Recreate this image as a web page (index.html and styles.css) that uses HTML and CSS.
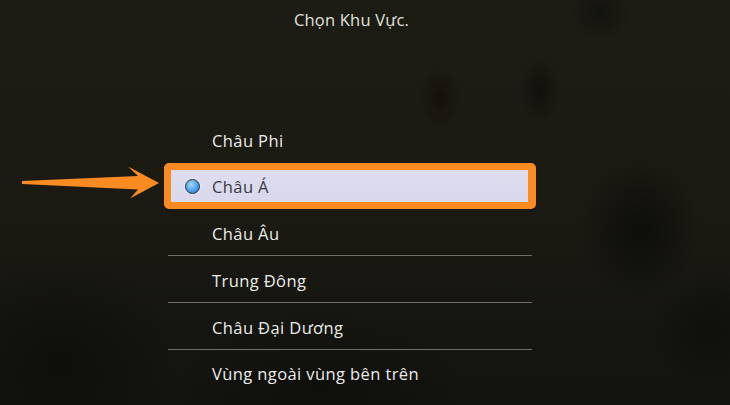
FILE: index.html
```html
<!DOCTYPE html>
<html lang="vi">
<head>
<meta charset="utf-8">
<title>Chọn Khu Vực</title>
<link rel="stylesheet" href="styles.css">
</head>
<body>
<main class="screen">
  <h1 class="title">Chọn Khu Vực.</h1>
  <ul class="regions">
    <li class="region">Châu Phi</li>
    <li class="region selected"><span class="radio"></span>Châu Á</li>
    <li class="region divided">Châu Âu</li>
    <li class="region divided">Trung Đông</li>
    <li class="region divided">Châu Đại Dương</li>
    <li class="region last">Vùng ngoài vùng bên trên</li>
  </ul>
  <svg class="pointer" width="170" height="50" viewBox="0 155 170 50" aria-hidden="true">
    <path d="M22,181 L138,176 L128,166.5 L159,183 L130,198.5 L138,189.5 L22,184 Z" fill="#f98b22"/>
  </svg>
</main>
</body>
</html>
```

FILE: styles.css
```css
* { box-sizing: border-box; }

html, body {
  margin: 0;
  padding: 0;
  width: 730px;
  height: 405px;
  overflow: hidden;
}

body {
  font-family: "Open Sans", "Noto Sans", sans-serif;
  background: #1a1912;
}

.screen {
  position: relative;
  width: 730px;
  height: 405px;
  overflow: hidden;
  background:
    radial-gradient(ellipse 20px 30px at 440px 98px, rgba(22, 10, 8, 0.6), transparent),
    radial-gradient(ellipse 20px 34px at 540px 90px, rgba(12, 12, 8, 0.6), transparent),
    radial-gradient(ellipse 30px 30px at 600px 12px, rgba(12, 12, 8, 0.5), transparent),
    radial-gradient(ellipse 60px 70px at 640px 230px, rgba(6, 6, 4, 0.6), transparent),
    radial-gradient(ellipse 60px 60px at 710px 330px, rgba(8, 8, 5, 0.5), transparent),
    radial-gradient(ellipse 120px 100px at 60px 360px, rgba(8, 8, 5, 0.5), transparent),
    radial-gradient(ellipse 150px 80px at 320px 390px, rgba(10, 10, 7, 0.5), transparent),
    linear-gradient(180deg, #1c1b14 0%, #1a1912 55%, #131310 100%);
}

.title {
  margin: 0;
  padding-top: 8px;
  padding-right: 27px;
  height: 117px;
  text-align: center;
  font-weight: 400;
  font-size: 16.5px;
  line-height: 24px;
  letter-spacing: 0.2px;
  color: #e2e2de;
}

.regions {
  list-style: none;
  margin: 0 0 0 164px;
  padding: 0;
  width: 372px;
}

.region {
  display: flex;
  align-items: center;
  height: 46px;
  padding-left: 48px;
  font-size: 16.5px;
  letter-spacing: 0.4px;
  color: #ebebe8;
}

.region.divided {
  margin: 0 4px;
  padding-left: 44px;
  height: 47px;
  border-bottom: 1px solid #6f6e6a;
  padding-top: 2px;
}

.region.last {
  padding-top: 1px;
}

.region.selected {
  border: 7px solid #f98b22;
  border-right-width: 8px;
  border-radius: 5px;
  background: linear-gradient(180deg, #dedcef, #dad8ec);
  padding-left: 14px;
  color: #3a3a3e;
}

.radio {
  width: 15px;
  height: 15px;
  border-radius: 50%;
  margin-right: 12px;
  border: 1px solid #22303e;
  background: radial-gradient(circle at 40% 35%, #a8d8fa 0%, #4aa0e8 55%, #2a6cb2 100%);
  box-shadow: 0 0 0 1px rgba(255, 255, 255, 0.35);
}

.pointer {
  position: absolute;
  left: 0;
  top: 155px;
}
```
